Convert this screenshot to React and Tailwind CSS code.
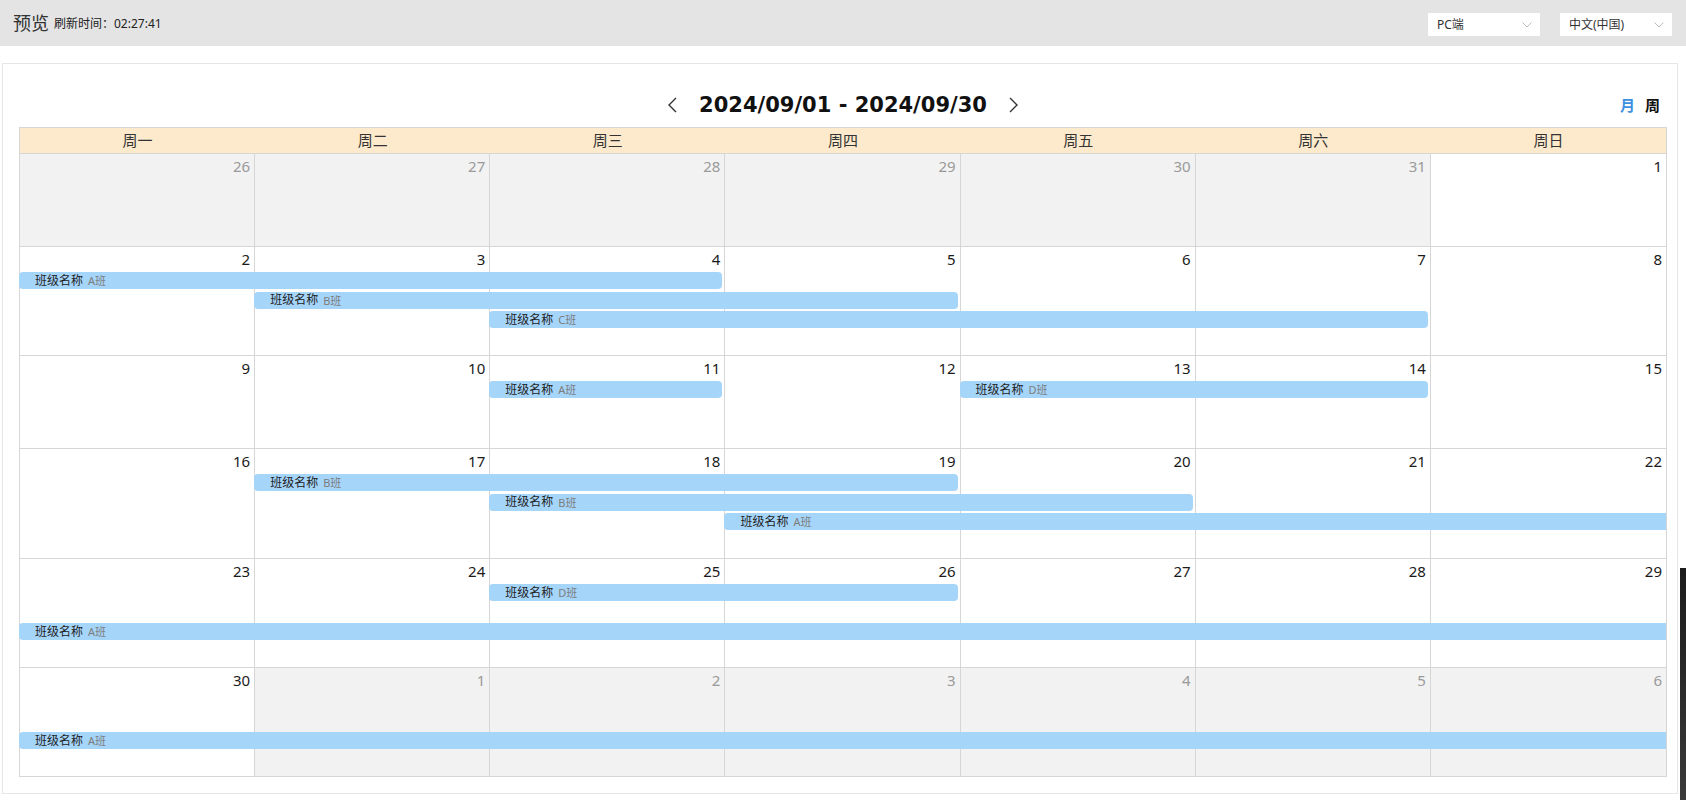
import React from 'react';

const weekdays = ['周一', '周二', '周三', '周四', '周五', '周六', '周日'];

const weeks = [
    { days: [26, 27, 28, 29, 30, 31, 1], other: [0, 1, 2, 3, 4, 5], h: 93, bars: [] },
    {
        days: [2, 3, 4, 5, 6, 7, 8], other: [], h: 109,
        bars: [
            { col: 0, span: 3, lane: 0, code: 'A班' },
            { col: 1, span: 3, lane: 1, code: 'B班' },
            { col: 2, span: 4, lane: 2, code: 'C班' },
        ],
    },
    {
        days: [9, 10, 11, 12, 13, 14, 15], other: [], h: 93,
        bars: [
            { col: 2, span: 1, lane: 0, code: 'A班' },
            { col: 4, span: 2, lane: 0, code: 'D班' },
        ],
    },
    {
        days: [16, 17, 18, 19, 20, 21, 22], other: [], h: 110,
        bars: [
            { col: 1, span: 3, lane: 0, code: 'B班' },
            { col: 2, span: 3, lane: 1, code: 'B班' },
            { col: 3, span: 4, lane: 2, code: 'A班', cont: true },
        ],
    },
    {
        days: [23, 24, 25, 26, 27, 28, 29], other: [], h: 109,
        bars: [
            { col: 2, span: 2, lane: 0, code: 'D班' },
            { col: 0, span: 7, lane: 2, code: 'A班', cont: true },
        ],
    },
    {
        days: [30, 1, 2, 3, 4, 5, 6], other: [1, 2, 3, 4, 5, 6], h: 109,
        bars: [{ col: 0, span: 7, lane: 2, code: 'A班', cont: true }],
    },
];

const SelectBox = ({ label }) => (
    <div className="w-[112px] h-[23px] bg-white flex items-center justify-between pl-[9px] pr-[8px] text-[12px] text-[#333]">
        <span>{label}</span>
        <svg width="10" height="6" viewBox="0 0 10 6" fill="none">
            <polyline points="0.5,0.5 5,5 9.5,0.5" stroke="#bdbdbd" strokeWidth="1" />
        </svg>
    </div>
);

const Chevron = ({ dir }) => (
    <svg width="11" height="16" viewBox="0 0 11 16" fill="none">
        {dir === 'left'
            ? <polyline points="9,1 2,8 9,15" stroke="#333" strokeWidth="1.4" />
            : <polyline points="2,1 9,8 2,15" stroke="#333" strokeWidth="1.4" />}
    </svg>
);

const App = () => {
    return (
        <div
            className="relative w-[1686px] h-[800px] overflow-hidden bg-white text-[#333]"
            style={{ fontFamily: '"Noto Sans", "Noto Sans CJK SC", sans-serif' }}
        >
            {/* Top bar */}
            <div className="h-[46px] bg-[#e4e4e4] flex items-center justify-between pl-[13px] pr-[14px]">
                <div className="flex items-center gap-[5px]">
                    <span className="text-[18px] text-[#333] leading-none">预览</span>
                    <span className="text-[12px] text-[#222] mt-[2px]">刷新时间：02:27:41</span>
                </div>
                <div className="flex items-center gap-[20px] mt-[3px]">
                    <SelectBox label="PC端" />
                    <SelectBox label="中文(中国)" />
                </div>
            </div>

            {/* Card */}
            <div className="mt-[17px] ml-[2px] mr-[8px] border border-[#e6e6e6] pl-[16px] pr-[10px] pt-[21px] pb-[16px]">
                <div className="grid grid-cols-[1fr_auto_1fr] items-center h-[40px] mb-[2px]">
                    <div />
                    <div className="flex items-center gap-[21px]">
                        <Chevron dir="left" />
                        <span
                            className="text-[21px] font-bold text-[#111] leading-none"
                            style={{ fontFamily: '"DejaVu Sans", sans-serif' }}
                        >
                            2024/09/01 - 2024/09/30
                        </span>
                        <Chevron dir="right" />
                    </div>
                    <div className="flex justify-end items-center gap-[10px] pr-[7px] text-[15px] font-bold">
                        <span className="text-[#3d8fe0]">月</span>
                        <span className="text-[#111]">周</span>
                    </div>
                </div>

                {/* Calendar */}
                <div className="border border-[#d6d6d6]">
                    <div className="grid grid-cols-7 h-[25px] bg-[#fdeacd]">
                        {weekdays.map((w) => (
                            <div key={w} className="flex items-center justify-center text-[15px] text-[#333]">{w}</div>
                        ))}
                    </div>
                    {weeks.map((week, wi) => (
                        <div key={wi} className="relative border-t border-[#d6d6d6]" style={{ height: week.h }}>
                            <div className="grid grid-cols-7 h-full">
                                {week.days.map((d, di) => {
                                    const other = week.other.includes(di);
                                    return (
                                        <div
                                            key={di}
                                            className={`${di < 6 ? 'border-r border-[#d6d6d6]' : ''} ${other ? 'bg-[#f2f2f2] text-[#9a9a9a]' : 'bg-white text-[#1a1a1a]'} text-right pr-[4px] pt-[2px] text-[15px] leading-[20px]`}
                                        >
                                            {d}
                                        </div>
                                    );
                                })}
                            </div>
                            {week.bars.map((b, bi) => (
                                <div
                                    key={bi}
                                    className={`absolute h-[17px] bg-[#a6d5fa] flex items-center pl-[16px] whitespace-nowrap overflow-hidden ${b.cont ? 'rounded-l-[4px]' : 'rounded-[4px]'}`}
                                    style={{
                                        top: 25 + b.lane * 19.5,
                                        left: `calc(${b.col} * 100% / 7 - 1px)`,
                                        width: `calc(${b.span} * 100% / 7 ${b.cont ? '+ 1px' : '- 2px'})`,
                                    }}
                                >
                                    <span className="text-[12px] text-[#222] leading-none">班级名称</span>
                                    <span className="text-[11px] text-[#7d7d7d] leading-none ml-[5px]">{b.code}</span>
                                </div>
                            ))}
                        </div>
                    ))}
                </div>
            </div>

            {/* edge of a window beside the screenshot */}
            <div className="absolute right-0 top-[568px] w-[6px] h-[232px] bg-gradient-to-b from-[#1c1c1c] via-[#2a2a2a] to-[#3a3a3a]" />
        </div>
    );
};

export default App;
